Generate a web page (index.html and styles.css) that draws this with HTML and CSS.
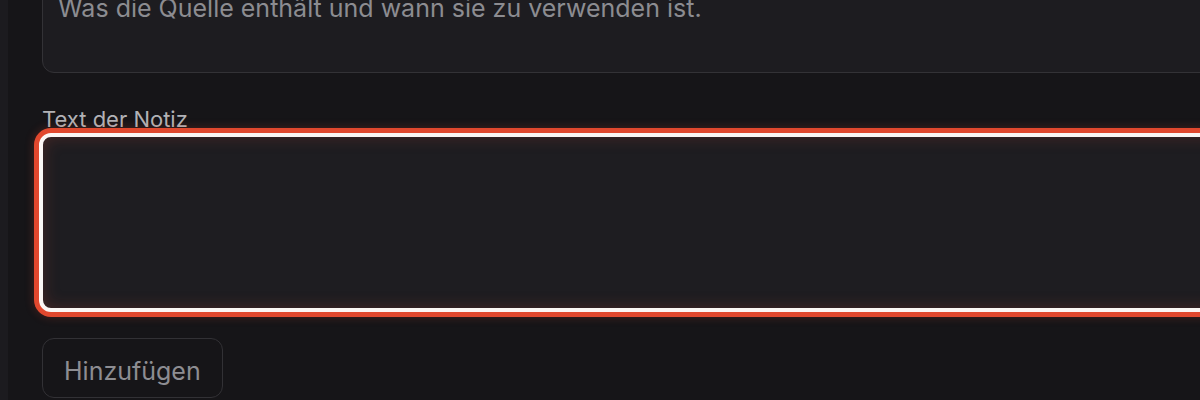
FILE: index.html
```html
<!DOCTYPE html>
<html lang="de">
<head>
<meta charset="utf-8">
<title>Notiz</title>
<link rel="stylesheet" href="styles.css">
</head>
<body>
<div class="layout">
  <aside class="rail"></aside>
  <main class="main">
    <form class="form">
      <textarea class="field field-desc" placeholder="Was die Quelle enthält und wann sie zu verwenden ist."></textarea>
      <label class="label" for="note">Text der Notiz</label>
      <textarea id="note" class="field field-note"></textarea>
      <div class="actions">
        <button type="button" class="btn">Hinzufügen</button>
      </div>
    </form>
  </main>
</div>
</body>
</html>
```

FILE: styles.css
```css
html, body {
  margin: 0;
  padding: 0;
  height: 100%;
  background: #161518;
  overflow: hidden;
}
body {
  font-family: Inter, "Noto Sans", "Liberation Sans", sans-serif;
}
.layout {
  display: flex;
  height: 100%;
  overflow: hidden;
}
.rail {
  width: 8px;
  flex: none;
  background: #1c1b1f;
}
.main {
  flex: 1;
  padding-left: 34px;
  min-width: 0;
  overflow: hidden;
}
.form {
  display: flex;
  flex-direction: column;
  margin-top: -23px;
  margin-right: -40px;
}
.field {
  font-family: inherit;
  resize: none;
  box-sizing: border-box;
  width: 100%;
  display: block;
  margin: 0;
  color: #d0d0d4;
}
.field-desc {
  height: 96px;
  padding: 12px 15px;
  font-size: 25px;
  line-height: 1.5;
  background: #1d1c20;
  border: 1px solid #333236;
  border-radius: 12px;
  outline: none;
}
.field-desc::placeholder {
  color: #8c8c91;
  opacity: 1;
}
.label {
  margin-top: 32px;
  font-size: 22px;
  line-height: 28px;
  color: #b2b2b6;
}
.field-note {
  margin-left: -3px;
  width: calc(100% + 3px);
  height: 179px;
  background: #1e1d21;
  border: 4px solid #fbf6f4;
  border-radius: 12px;
  outline: none;
  box-shadow: 0 0 0 5px #e1482e, 0 0 10px 5px rgba(225, 72, 46, 0.25), inset 0 0 16px rgba(200, 70, 50, 0.25);
}
.actions {
  margin-top: 26px;
  display: flex;
}
.btn {
  font-family: inherit;
  font-size: 25px;
  line-height: 36px;
  padding: 14px 21px 8px;
  width: 181px;
  box-sizing: border-box;
  text-align: left;
  background: #161518;
  color: #8d8d92;
  border: 1px solid #323135;
  border-radius: 12px;
}
```
